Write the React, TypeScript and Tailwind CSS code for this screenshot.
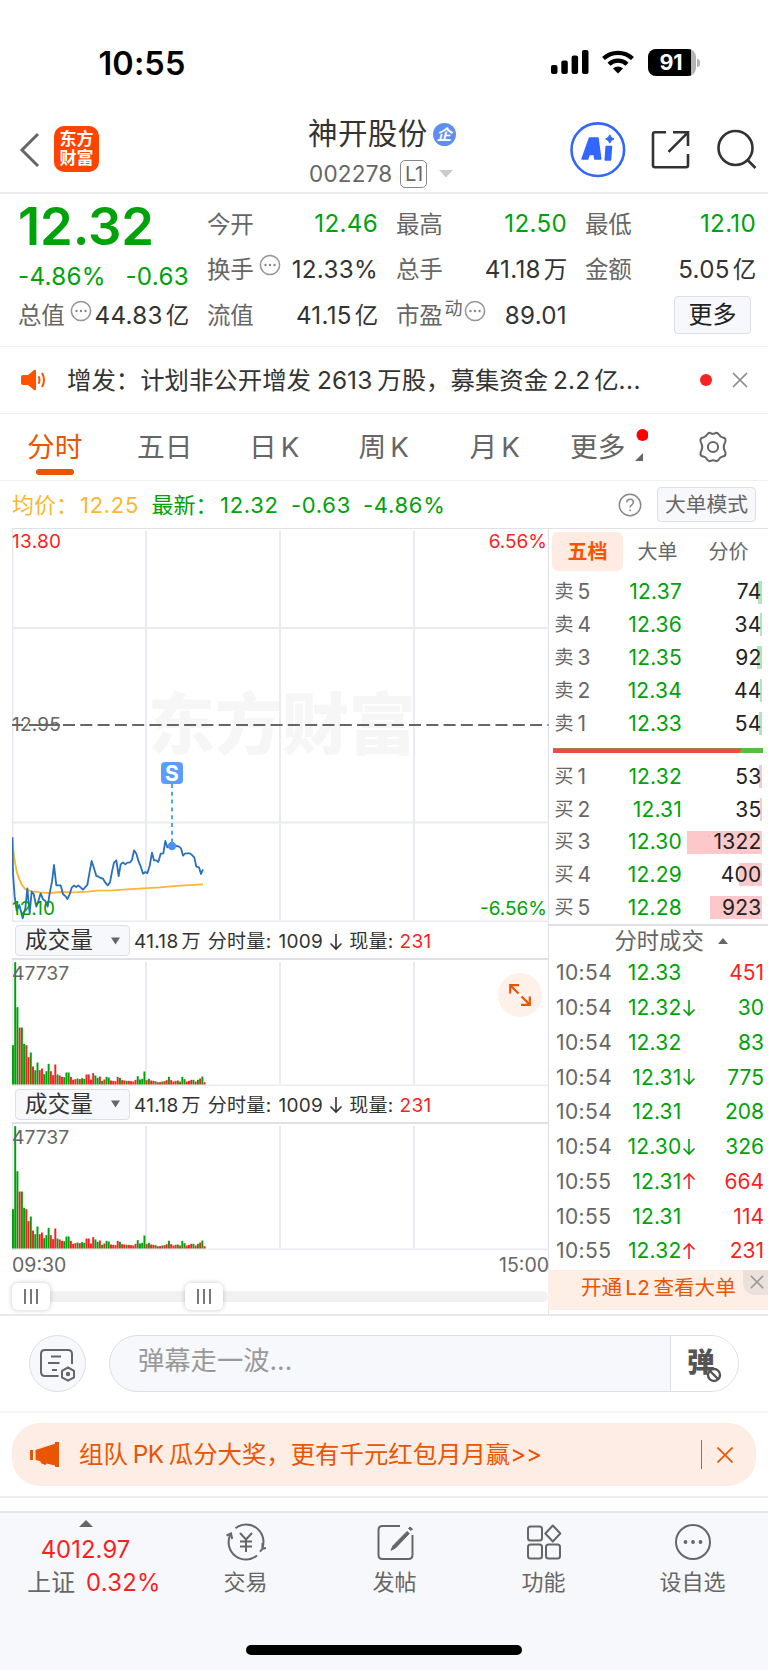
import type { ReactNode } from "react";

const GREEN = "#00a20a";
const RED = "#fb1f22";

const price =
  "37,292 39,400 44,470 50,512 58,495 68,535 76,505 82,445 89,520 95,455 101,462 109,500 116,480 122,460 129,478 136,483 143,500 149,460 156,425 162,375 169,436 182,436 189,463 196,468 202,477 209,463 215,443 222,437 229,441 235,436 249,449 262,435 269,395 275,363 282,385 289,408 296,410 302,414 309,416 316,428 323,436 330,427 336,395 342,368 349,361 356,408 362,373 369,367 376,373 382,368 390,367 396,360 402,331 409,341 416,365 422,379 429,401 436,396 442,400 449,378 456,338 462,361 469,361 475,366 482,341 490,340 496,303 502,322 515,318 530,318 536,319 543,325 549,347 556,340 570,340 576,345 583,353 589,380 597,382 603,402 609,388";
const average =
  "37,292 42,350 50,395 58,418 66,435 76,448 95,454 120,457 150,459 180,456 220,457 265,455 290,452 340,451 380,448 430,445 480,442 540,437 609,433";

const volumes =
  "118g 367g 232g 171r 171g 122g 118r 82r 96g 54r 43g 66g 43r 48r 31g 40g 62g 40r 28r 60r 30g 27r 23r 22g 36g 36g 23r 14r 16r 18g 16r 19g 17g 30r 30r 15r 34r 27g 20g 24r 11g 15r 23g 21g 12r 11r 10r 23r 20g 13r 12r 11g 11r 10r 9r 14r 25g 15g 17g 39g 13r 17g 12r 11r 10g 7r 7r 9g 10r 13r 23g 13r 9r 11r 12g 9r 23g 16g 9r 11r 14r 14g 9r 14g 18r 24g 7r".split(
    " ",
  );

const sells = [
  ["5", "12.37", "74", 4],
  ["4", "12.36", "34", 2],
  ["3", "12.35", "92", 5],
  ["2", "12.34", "44", 2],
  ["1", "12.33", "54", 3],
] as const;
const buys = [
  ["1", "12.32", "53", 3],
  ["2", "12.31", "35", 2],
  ["3", "12.30", "1322", 75],
  ["4", "12.29", "400", 23],
  ["5", "12.28", "923", 52],
] as const;
const trades = [
  ["10:54", "12.33", "", "451", "r"],
  ["10:54", "12.32", "↓", "30", "g"],
  ["10:54", "12.32", "", "83", "g"],
  ["10:54", "12.31", "↓", "775", "g"],
  ["10:54", "12.31", "", "208", "g"],
  ["10:54", "12.30", "↓", "326", "g"],
  ["10:55", "12.31", "↑", "664", "r"],
  ["10:55", "12.31", "", "114", "r"],
  ["10:55", "12.32", "↑", "231", "r"],
] as const;

function Dots({ className = "" }: { className?: string }) {
  return (
    <svg viewBox="0 0 22 22" className={"h-[22px] w-[22px] " + className} fill="none">
      <circle cx="11" cy="11" r="9.6" stroke="#949494" strokeWidth="1.5" />
      <g fill="#888">
        <circle cx="6.5" cy="11" r="1.2" />
        <circle cx="11" cy="11" r="1.2" />
        <circle cx="15.5" cy="11" r="1.2" />
      </g>
    </svg>
  );
}

function Arrow({ up = false, color }: { up?: boolean; color: string }) {
  return (
    <svg viewBox="0 0 14 18" className="h-[18px] w-[14px]" fill="none" stroke={color} strokeWidth="1.6">
      {up ? <path d="M7 17V2M1.5 7.5 7 2l5.5 5.5" /> : <path d="M7 1v15M1.5 10.5 7 16l5.5-5.5" />}
    </svg>
  );
}

function StatusBar() {
  return (
    <div className="flex h-[110px] items-start justify-between pl-[98.5px] pr-[68px] pt-[47.5px]">
      <div className="text-[32.5px] leading-[32px] font-semibold tracking-[0.1px] text-black">10:55</div>
      <div className="flex items-start pt-[1.5px]">
        <svg viewBox="0 0 38 24" className="mt-[1px] h-6 w-[38px]">
          <rect x="0" y="15" width="6.5" height="9" rx="2" />
          <rect x="10.3" y="10.5" width="6.5" height="13.5" rx="2" />
          <rect x="20.6" y="5.5" width="6.5" height="18.5" rx="2" />
          <rect x="31" y="0" width="6.5" height="24" rx="2" />
        </svg>
        <svg viewBox="0 0 32 24" className="ml-[13px] mt-[1px] h-6 w-8" fill="none" stroke="#000" strokeWidth="4.2">
          <path d="M1.5 8.6a21 21 0 0 1 29 0" />
          <path d="M7 14.3a13 13 0 0 1 18 0" />
          <path d="M16 23.5l-5-5a7.3 7.3 0 0 1 10 0z" fill="#000" stroke="none" />
        </svg>
        <div className="relative ml-[14px] flex h-[27px] w-[48px] items-center overflow-hidden rounded-[8px] bg-[#b4b4b4]">
          <div className="flex h-full w-[43px] items-center justify-center bg-black pt-[1px] pl-[4px] text-[21.5px] leading-none font-bold text-white">
            91
          </div>
        </div>
        <div className="ml-[1.5px] mt-[10px] h-2 w-[3px] rounded-r-full bg-[#b4b4b4]" />
      </div>
    </div>
  );
}

function Header() {
  return (
    <div className="flex h-[84px] border-b-2 border-[#ebebeb] pl-[19px]">
      <svg viewBox="0 0 22 36" className="mt-[22px] h-9 w-[22px]" fill="none" stroke="#666" strokeWidth="3">
        <path d="M19 2 3 18l16 16" />
      </svg>
      <div className="ml-[13px] mt-[16px] flex h-[46px] w-[45px] flex-col items-center justify-center rounded-[10px] bg-[#ff4400] text-[17px] leading-[19px] font-semibold text-white">
        <span>东方</span>
        <span>财富</span>
      </div>
      <div className="ml-[209px] w-[160px]">
        <div className="mt-[8px] flex h-[32px] items-center text-[29.5px] leading-none text-[#333]">
          <span className="tracking-[0.4px]">神开股份</span>
          <span className="ml-[5px] flex h-[23px] w-[23px] items-center justify-center rounded-full bg-[#5f8fee] text-[15px] font-bold text-white italic">
            企
          </span>
        </div>
        <div className="mt-[9.5px] flex h-[28px] items-center pl-[1px] text-[22.5px] leading-none text-[#666]">
          <span className="pt-[1px] tracking-[0.2px]">002278</span>
          <span className="ml-[8px] flex h-[28px] w-[27px] items-center justify-center rounded-[5px] border-[1.5px] border-[#888] text-[20px] tracking-[-0.3px]">
            L1
          </span>
          <svg viewBox="0 0 14 8" className="ml-[12px] h-2 w-[14px]">
            <path d="M0 0h14L7 7.5z" fill="#ccc" />
          </svg>
        </div>
      </div>
      <svg viewBox="570 122 198 56" className="ml-[102px] mt-[12px] h-[56px] w-[198px] shrink-0" fill="none">
        <circle cx="597.8" cy="149.7" r="26.3" stroke="#3366ff" strokeWidth="2.6" />
        <g fill="#3366ff" stroke="#3366ff" strokeWidth="1.5" strokeLinejoin="round" fillRule="evenodd">
          <path d="M582 159 589.5 138h8.500l2.800 21h-6l-.6-4.500h-5l-1.500 4.500zM591.500 149.800h2.300l-.4-5z" />
          <path d="m606.200 146.500h5.300l-1 13.500h-5.300z" />
        </g>
        <path d="m609.800 134.800 1.500 2.700 2.700 1.500-2.700 1.500-1.500 2.700-1.500-2.700-2.700-1.500 2.700-1.500z" fill="#3366ff" stroke="#3366ff" strokeWidth="1" />
        <g stroke="#333" strokeWidth="2.6">
          <path d="M666 132.300h-11a2 2 0 0 0-2 2v31a2 2 0 0 0 2 2h31a2 2 0 0 0 2-2V154" />
          <path d="M673 132.300h15V146M688 132.300l-19.500 19.500" />
          <circle cx="735.5" cy="148" r="17" />
          <path d="m747.500 160 8 8" />
        </g>
      </svg>
    </div>
  );
}

function Cell({
  label,
  value,
  unit,
  green = false,
  extra,
}: {
  label: string;
  value: string;
  unit?: string;
  green?: boolean;
  extra?: ReactNode;
}) {
  return (
    <div className="flex items-center justify-between">
      <span className="flex items-center text-[#666]">
        {label}
        {extra}
      </span>
      <span className={green ? "-mr-px text-[#00a20a]" : "-mr-px text-[#333]"}>
        <span className="text-[24.2px] tracking-[0.3px]">{value}</span>
        {unit && <span className="ml-[3px]">{unit}</span>}
      </span>
    </div>
  );
}

function Quote() {
  return (
    <div className="flex h-[153px] border-b border-[#f2f2f2] pl-[18px] text-[23.5px] leading-none tracking-[-0.3px] whitespace-nowrap">
      <div className="w-[170px] text-[#00a20a]">
        <div className="mt-[6px] h-[52px] text-[52.5px] leading-[52px] font-semibold tracking-[-0.1px]">12.32</div>
        <div className="mt-[7px] flex h-[36px] items-center justify-between text-[24.2px] tracking-[0.3px]">
          <span>-4.86%</span>
          <span className="-mr-px">-0.63</span>
        </div>
        <div className="mt-px grid h-[40px]">
          <Cell label="总值" value="44.83" unit="亿" extra={<Dots className="mb-[10px] ml-[6px] mr-[-8px]" />} />
        </div>
      </div>
      <div className="ml-[19px] mt-[7.5px] grid h-[137px] grid-cols-[170px_170px_170px] grid-rows-3 gap-x-[19px]">
        <Cell label="今开" value="12.46" green />
        <Cell label="最高" value="12.50" green />
        <Cell label="最低" value="12.10" green />
        <Cell label="换手" value="12.33%" extra={<Dots className="mb-[10px] ml-[6px]" />} />
        <Cell label="总手" value="41.18" unit="万" />
        <Cell label="金额" value="5.05" unit="亿" />
        <Cell label="流值" value="41.15" unit="亿" />
        <Cell
          label="市盈"
          value="89.01"
          extra={
            <>
              <span className="mb-[13px] ml-[2px] text-[18px]">动</span>
              <Dots className="mb-[9px] ml-[2px]" />
            </>
          }
        />
        <div className="flex items-center justify-end pr-[4px] pb-[2px]">
          <span className="flex h-[38px] w-[77px] items-center justify-center rounded-[4px] border-[1.5px] border-[#dcdfe6] bg-[#f7f8fb] text-[24px] tracking-normal text-[#222]">
            更多
          </span>
        </div>
      </div>
    </div>
  );
}

function Notice() {
  return (
    <div className="flex h-[67px] items-center border-b border-[#eee] pl-[21px] text-[#333]">
      <svg viewBox="0 0 26 22" className="h-[22px] w-[26px]">
        <path d="M2 6h5l6-5q2-1 2 1v18q0 2-2 1l-6-5H2q-2 0-2-2V8q0-2 2-2z" fill="#ff5200" />
        <path d="M17.5 7.2q2 3.800 0 7.600M21 4q4 7 0 14" fill="none" stroke="#ff5200" strokeWidth="2" />
      </svg>
      <span className="ml-[20px] w-[617.500px] text-[24.400px] leading-none whitespace-nowrap">
        增发：计划非公开增发<span className="ml-[6px] tracking-[0.100px]">2613</span>
        <span className="ml-[5px]">万股，募集资金</span>
        <span className="ml-[5px] tracking-[0.100px]">2.2</span>
        <span className="ml-[4px]">亿</span>
        <span className="tracking-[0.500px]">...</span>
      </span>
      <span className="ml-[15px] h-3 w-3 rounded-full bg-[#f92222]" />
      <svg viewBox="0 0 16 16" className="ml-[20px] h-4 w-4" stroke="#8a8a8a" strokeWidth="1.7">
        <path d="M1 1l14 14M15 1 1 15" />
      </svg>
    </div>
  );
}

function Tabs() {
  return (
    <div className="flex h-[67px] border-b border-[#f0f0f0] text-[27.700px] leading-none whitespace-nowrap text-[#666]">
      <div className="ml-[27px] flex w-[110px] flex-col pt-[19.500px] text-[#ea5504]">
        <span className="h-[28px]">分时</span>
        <span className="ml-[9px] mt-[7.500px] h-[6px] w-[38px] rounded-full bg-[#ea5504]" />
      </div>
      <div className="w-[112px] pt-[19.500px]">五日</div>
      <div className="w-[109.500px] pt-[19.500px]">
        日<span className="ml-[4px]">K</span>
      </div>
      <div className="w-[111px] pt-[19.500px]">
        周<span className="ml-[4px]">K</span>
      </div>
      <div className="w-[100.500px] pt-[19.500px]">
        月<span className="ml-[4px]">K</span>
      </div>
      <div className="w-[65px] pt-[19.500px]">更多</div>
      <svg viewBox="634 428 14 36" className="ml-[-1px] mt-[14px] h-9 w-[14px]">
        <circle cx="642.5" cy="435" r="6" fill="#ff0000" />
        <path d="M643 453v8h-8z" fill="#666" />
      </svg>
      <svg viewBox="0 0 32 32" className="ml-[48px] mt-[16px] h-[34px] w-[34px]" fill="none" stroke="#666" strokeWidth="1.9">
        <circle cx="16" cy="16" r="4.8" />
        <path d="M10.500 4.200q1.400-2 3.300-1.300 2.200 1.300 4.400 0 1.900-.7 3.300 1.300 1 2.400 3.700 2.800 2.400.3 2.600 2.300.1 2-.9 3.400-1.600 3.300 0 6.600 1 1.400.9 3.400-.2 2-2.600 2.300-2.700.4-3.700 2.800-1.400 2-3.300 1.300-2.200-1.300-4.400 0-1.900.7-3.300-1.300-1-2.400-3.700-2.800-2.400-.3-2.600-2.300-.1-2 .9-3.400 1.600-3.300 0-6.600-1-1.400-.9-3.400.2-2 2.600-2.300 2.700-.4 3.700-2.800z" />
      </svg>
    </div>
  );
}

function InfoRow() {
  return (
    <div className="flex h-[47px] items-center pl-[12px] pr-[12px] text-[22px] leading-none tracking-[0.700px] whitespace-nowrap text-[#00a20a]">
      <span className="w-[68px] tracking-normal text-[#fdb62f]">均价：</span>
      <span className="w-[71.500px] text-[#fdb62f]">12.25</span>
      <span className="w-[68.500px] tracking-normal">最新：</span>
      <span className="w-[71px]">12.32</span>
      <span className="w-[72px]">-0.63</span>
      <span>-4.86%</span>
      <svg viewBox="0 0 24 24" className="ml-auto h-6 w-6" fill="none" stroke="#888" strokeWidth="1.5">
        <circle cx="12" cy="12" r="10.7" />
        <path d="M8.800 9.600q0-3.400 3.300-3.400t3.300 3q0 1.600-1.700 2.700-1.600 1.100-1.600 2.700M12.100 16.500v1.700" />
      </svg>
      <span className="ml-[15px] flex h-[35px] w-[99px] items-center justify-center rounded-[4px] border-[1.5px] border-[#dcdfe6] bg-[#f7f8fb] pt-[1px] text-[20.800px] tracking-normal text-[#666]">
        大单模式
      </span>
    </div>
  );
}

function PriceChart() {
  return (
    <div className="relative h-[394px] text-[19px] leading-none">
      <div className="absolute top-[161px] left-[136px] text-[67px] leading-[70px] font-black text-[#f6f6f6]">东方财富</div>
      <svg viewBox="12 528 537 394" className="absolute -top-px left-0 h-[394px] w-[537px]" fill="none">
        <g stroke="#e9ebf1" strokeWidth="2">
          <path d="M12 628h537M12 822.500h537M146 531v389M280 531v389M414 531v389" />
          <path d="M12.500 528v394" />
          <path d="M12 921.500h537" />
        </g>
        <path d="M12 725h11M29 725h31" stroke="#666" strokeWidth="1.8" />
        <path d="M63 725h485.500" stroke="#666" strokeWidth="2" strokeDasharray="12 5.3" />
        <path d="M172 784v60" stroke="#5b9dff" strokeWidth="2" strokeDasharray="4 3.8" />
        <g transform="translate(0 740) scale(.33333)" strokeLinejoin="round">
          <polyline points={average} stroke="#fdb62f" strokeWidth="5.5" />
          <polyline points={price} stroke="#2b70bd" strokeWidth="5.5" />
        </g>
        <circle cx="172" cy="846" r="4.2" fill="#4a90f5" />
      </svg>
      <div className="absolute top-[233px] left-[149px] flex h-[22px] w-[22px] items-center justify-center rounded-[4px] bg-[#5b9dff] text-[21px] font-bold text-white">
        S
      </div>
      <span className="absolute top-[2.500px] left-0 tracking-[0.300px] text-[#fb1f22]">13.80</span>
      <span className="absolute top-[2.500px] right-px text-[#fb1f22]">6.56%</span>
      <span className="absolute top-[186px] left-0 tracking-[0.200px] text-[#666]">12.95</span>
      <span className="absolute top-[370px] left-0 text-[#00a20a]">12.10</span>
      <span className="absolute top-[370px] right-px text-[#00a20a]">-6.56%</span>
    </div>
  );
}

function Volume({ expand = false }: { expand?: boolean }) {
  return (
    <>
      <div className="flex h-[37px] items-center border-b-2 border-[#dfe1e6] pl-[3px] text-[19px] leading-none tracking-[0.300px] whitespace-nowrap text-[#333]">
        <div className="flex h-[31px] w-[115px] items-center justify-between rounded-[4px] border-[1.5px] border-[#dcdfe6] bg-[#f7f8fb] pr-[9px] pl-[9px] text-[22.400px]">
          <span>成交量</span>
          <svg viewBox="0 0 10 8" className="h-2 w-[9px]">
            <path d="M0 0h10L5 8z" fill="#666" />
          </svg>
        </div>
        <div className="flex items-center pt-[2px]">
          <span className="ml-[4px]">41.18</span>
          <span className="ml-[3px]">万</span>
          <span className="ml-[7px]">分时量:</span>
          <span className="ml-[7px]">1009</span>
          <span className="ml-[6px]">
            <Arrow color="#333" />
          </span>
          <span className="ml-[6px]">现量:</span>
          <span className="ml-[6px]  text-[#fb1f22]">231</span>
        </div>
      </div>
      <div className="relative h-[126.500px]">
        <svg viewBox="12 0 537 126" className="h-[126px] w-[537px]">
          <path d="M12.500 0v126M146 2v122M280 2v122M414 2v122M12 125.500h537" stroke="#e9ebf1" strokeWidth="2" />
          {volumes.map((v, i) => {
            const h = parseInt(v, 10) / 3;
            return (
              <rect key={i} x={12 + i * 2.228} y={124.5 - h} width="1.95" height={h} fill={v.endsWith("g") ? GREEN : RED} />
            );
          })}
        </svg>
        <span className="absolute top-[4px] left-0 text-[19.300px] leading-none text-[#666]">47737</span>
        {expand && (
          <div className="absolute top-[12.500px] right-[6px] flex h-[44px] w-[44px] items-center justify-center rounded-full bg-[#fdf1ea]">
            <svg viewBox="0 0 22 22" className="h-[22px] w-[22px]" fill="none" stroke="#ea5504" strokeWidth="2.2">
              <path d="M1.200 9.500V1.200H10M1.200 1.200l8.300 8.300M20.800 12.500v8.300H12M20.800 20.800l-8.300-8.300" />
            </svg>
          </div>
        )}
      </div>
    </>
  );
}

function Thumb({ className }: { className: string }) {
  return (
    <div
      className={
        "absolute top-0 flex h-[27px] w-[38px] items-center justify-center gap-[4px] rounded-[6px] bg-white shadow-[0_0_5px_rgba(0,0,0,0.22)] " +
        className
      }
    >
      <i className="h-[15px] w-[2px] bg-[#777]" />
      <i className="h-[15px] w-[2px] bg-[#777]" />
      <i className="h-[15px] w-[2px] bg-[#777]" />
    </div>
  );
}

function Level({ side, row, color }: { side: string; row: readonly [string, string, string, number]; color: string }) {
  return (
    <div className="relative flex h-[32.800px] items-center pr-[6.500px] pl-[6.500px] text-[21px] tracking-[0.200px]">
      <span className={"absolute top-[5px] right-[6px] h-[23px] " + color} style={{ width: row[3] }} />
      <span className="w-[23px] text-[19px] text-[#666]">{side}</span>
      <span className="text-[#666]">{row[0]}</span>
      <span className="absolute right-[86px] text-[#00a20a]">{row[1]}</span>
      <span className="relative ml-auto text-[#222]">{row[2]}</span>
    </div>
  );
}

function Book() {
  return (
    <div className="flex w-[220px] flex-col text-[20px] leading-none whitespace-nowrap">
      <div className="mt-[3px] ml-[4px] flex h-[39px] items-center text-[#666]">
        <span className="flex h-[39px] w-[71px] items-center justify-center rounded-[6px] bg-[#feece3] font-bold text-[#ff5200]">五档</span>
        <span className="ml-[14.500px]">大单</span>
        <span className="ml-[31px]">分价</span>
      </div>
      <div className="mt-[4.500px]">
        {sells.map((r) => (
          <Level key={r[0]} side="卖" row={r} color="bg-[#b6e3b8]" />
        ))}
      </div>
      <div className="mt-[9px] ml-[5px] flex h-[5px] w-[210px] bg-[#5bbb41]">
        <div className="w-[189px] bg-[#ee484a] [clip-path:polygon(0_0,100%_0,98%_100%,0_100%)]" />
      </div>
      <div className="mt-[6.500px]">
        {buys.map((r) => (
          <Level key={r[0]} side="买" row={r} color="bg-[#fcc8c9]" />
        ))}
      </div>
      <div className="flex h-[31.500px] items-center border-t-2 border-[#dfe1e6] pl-[66.500px] text-[22.300px] text-[#666]">
        分时成交
        <svg viewBox="0 0 10 6" className="ml-[14px] h-[6px] w-[10px]">
          <path d="M0 6h10L5 0z" fill="#666" />
        </svg>
      </div>
      <div className="text-[21px]">
        {trades.map((t, i) => (
          <div key={i} className="flex h-[34.750px] items-center pr-[4px] pl-[8px]">
            <span className="w-[56px] tracking-[0.400px] text-[#666]">{t[0]}</span>
            <span className="w-[69.500px] text-right tracking-[0.200px] text-[#00a20a]">{t[1]}</span>
            <span className="w-[14px]">{t[2] && <Arrow up={t[2] === "↑"} color={t[2] === "↑" ? RED : GREEN} />}</span>
            <span className={t[4] === "g" ? "ml-auto text-[#00a20a]" : "ml-auto text-[#fb1f22]"}>{t[3]}</span>
          </div>
        ))}
      </div>
      <div className="relative mt-[1.500px] flex h-[40px] items-center bg-[#fdeee6] pb-[2px] pl-[33px] text-[20.600px] text-[#ea5504]">
        开通<span className="mx-[3px] tracking-[0.500px]">L2</span>查看大单
        <span className="absolute top-0 right-0 flex h-[25px] w-[25px] items-center justify-center rounded-bl-[12px] bg-[#ece0da]">
          <svg viewBox="0 0 16 16" className="ml-[3px] h-[14px] w-[14px]" stroke="#999" strokeWidth="1.7">
            <path d="M1 1l14 14M15 1 1 15" />
          </svg>
        </span>
      </div>
    </div>
  );
}

function CommentBar() {
  return (
    <div className="flex h-[97px] items-center border-b-2 border-[#f6f6f6] pl-[29px]">
      <div className="flex h-[57px] w-[57px] items-center justify-center rounded-full border border-[#dcdfe6] bg-[#f7f8fb]">
        <svg viewBox="40 1347 38 34" className="mt-[2px] ml-[1px] h-[34px] w-[38px]" fill="none" stroke="#666" strokeWidth="2">
          <path d="M59.500 1375H46q-4 0-4-4v-18q0-4 4-4h23q4 0 4 4v10" />
          <path d="M52 1355.500h10M49 1362h11.500M53 1369h5" />
          <path d="m69 1366.500 6 3.300v6.600l-6 3.300-6-3.300v-6.600z" strokeLinejoin="round" />
          <circle cx="69" cy="1373" r="1.2" />
        </svg>
      </div>
      <div className="ml-[23px] flex h-[57px] w-[630px] overflow-hidden rounded-full border border-[#dcdfe6] bg-[#f7f8fb] text-[26.300px] leading-none text-[#999]">
        <div className="flex-1 pt-[12px] pl-[28px]">弹幕走一波...</div>
        <div className="relative w-[68px] border-l border-[#dcdfe6] bg-white pt-[13px] pl-[16px] text-[27.500px] font-black text-[#555]">
          弹
          <svg viewBox="0 0 16 16" className="absolute top-[31px] left-[35px] h-4 w-4" fill="#fff" stroke="#555" strokeWidth="2.4">
            <circle cx="8" cy="8" r="6" />
            <path d="m4 4 8 8" />
          </svg>
        </div>
      </div>
    </div>
  );
}

function Promo() {
  return (
    <div className="border-b-2 border-[#eee] px-[12px] pt-[10px] pb-[10px]">
      <div className="flex h-[63px] items-center rounded-[28px] bg-[#fdede5] text-[24.400px] leading-none whitespace-nowrap text-[#ea5504]">
        <svg viewBox="0 0 30 26" className="ml-[18px] h-[26px] w-[30px]" fill="#ea5504">
          <path d="M0 8h3v10H0zM5.500 8 25 1.800V0h4v25h-4v-1.500l-8.500-2-1 1.500-4-1.500-1.500-2.500-4.500-1z" />
        </svg>
        <span className="ml-[19px]">组队</span>
        <span className="ml-[5px] tracking-[-0.500px]">PK</span>
        <span className="ml-[5px]">瓜分大奖，更有千元红包月月赢</span>
        <span className="tracking-[-0.500px]">&gt;&gt;</span>
        <span className="ml-auto h-[29px] w-[1.500px] bg-[#ea5504]" />
        <svg viewBox="0 0 16 16" className="mr-[23px] ml-[15px] h-4 w-4" stroke="#ea5504" strokeWidth="1.7">
          <path d="M.5.500l15 15M15.500.500l-15 15" />
        </svg>
      </div>
    </div>
  );
}

function NavItem({ label, children }: { label: string; children: ReactNode }) {
  return (
    <div className="flex w-[149px] flex-col items-center">
      <svg viewBox="0 0 42 38" className="mt-[9.500px] h-[38px] w-[42px]" fill="none" stroke="#666" strokeWidth="2">
        {children}
      </svg>
      <span className="mt-[10.500px] text-[22px]">{label}</span>
    </div>
  );
}

function BottomNav() {
  return (
    <div className="mt-[13px] flex h-[160px] flex-col border-t-2 border-[#e6e6e6] bg-[#f7f8fb] leading-none whitespace-nowrap text-[#666]">
      <div className="flex h-[131.500px]">
        <div className="flex w-[171px] flex-col items-center text-[23.800px]">
          <svg viewBox="0 0 14 7" className="mt-[7px] h-[7px] w-[14px]">
            <path d="M0 7h14L7 0z" fill="#666" />
          </svg>
          <span className="mt-[10.500px] tracking-[0.100px] text-[#fb1f22]">4012.97</span>
          <span className="mt-[9.500px] ml-[17px]">
            上证<span className="ml-[11px] tracking-[0.300px] text-[#fb1f22]">0.32%</span>
          </span>
        </div>
        <NavItem label="交易">
          <path d="M10.500 5.200A17.300 17.300 0 0 1 37.500 24.500M32 32.500A17.300 17.300 0 0 1 5.200 12" />
          <path d="m1.500 12.500 4.500-2 1.200 5.500M41 25l-3.500.700-2.500 3M37.500 20v6" />
          <path d="m15 10 6 6.500 6-6.500M15 18.500h12M15 23.500h12M21 16.500V29" />
        </NavItem>
        <NavItem label="发帖">
          <path d="M26 3H8.500Q4.500 3 4.500 7v25q0 4 4 4h26q4 0 4-4V12" />
          <path d="m33 8.500 2.300 2L21.500 25l-4.500 2.300 2-4.600zM36 4l2.500 2-1.500 1.500-2.500-2z" fill="#666" strokeWidth="1" />
        </NavItem>
        <NavItem label="功能">
          <rect x="5" y="3.5" width="14" height="14" rx="2.5" />
          <rect x="5" y="21.5" width="14" height="14" rx="2.5" />
          <rect x="23" y="21.5" width="14" height="14" rx="2.5" />
          <path d="m29.800 2.500 7.500 8-7.500 8-7.500-8z" strokeLinejoin="round" />
        </NavItem>
        <NavItem label="设自选">
          <circle cx="21" cy="19" r="17" />
          <g fill="#666" stroke="none">
            <circle cx="13.5" cy="19" r="1.9" />
            <circle cx="21" cy="19" r="1.9" />
            <circle cx="28.5" cy="19" r="1.9" />
          </g>
        </NavItem>
      </div>
      <div className="mx-auto h-[10px] w-[276px] rounded-full bg-black" />
    </div>
  );
}

export default function App() {
  return (
    <div className="h-[1670px] w-[768px] overflow-hidden bg-white font-['Inter','Noto_Sans_CJK_SC',sans-serif]">
      <StatusBar />
      <Header />
      <Quote />
      <Notice />
      <Tabs />
      <InfoRow />
      <div className="flex h-[788px] border-b-2 border-[#e9e9eb]">
        <div className="w-[549px] border-r border-[#dfe1e6] pl-[12px]">
          <div className="border-t border-[#dfe1e6]">
            <PriceChart />
          </div>
          <Volume expand />
          <Volume />
          <div className="-mr-px flex justify-between pt-[6px] text-[19.500px] leading-none text-[#666]">
            <span>09:30</span>
            <span>15:00</span>
          </div>
          <div className="relative mt-[7px] h-[27px] pt-[8px]">
            <div className="h-[11px] rounded-full bg-[#f1f1f3]" />
            <Thumb className="left-0" />
            <Thumb className="left-[173px]" />
          </div>
        </div>
        <div className="-ml-px border-t border-[#dfe1e6]">
          <Book />
        </div>
      </div>
      <CommentBar />
      <Promo />
      <BottomNav />
    </div>
  );
}
